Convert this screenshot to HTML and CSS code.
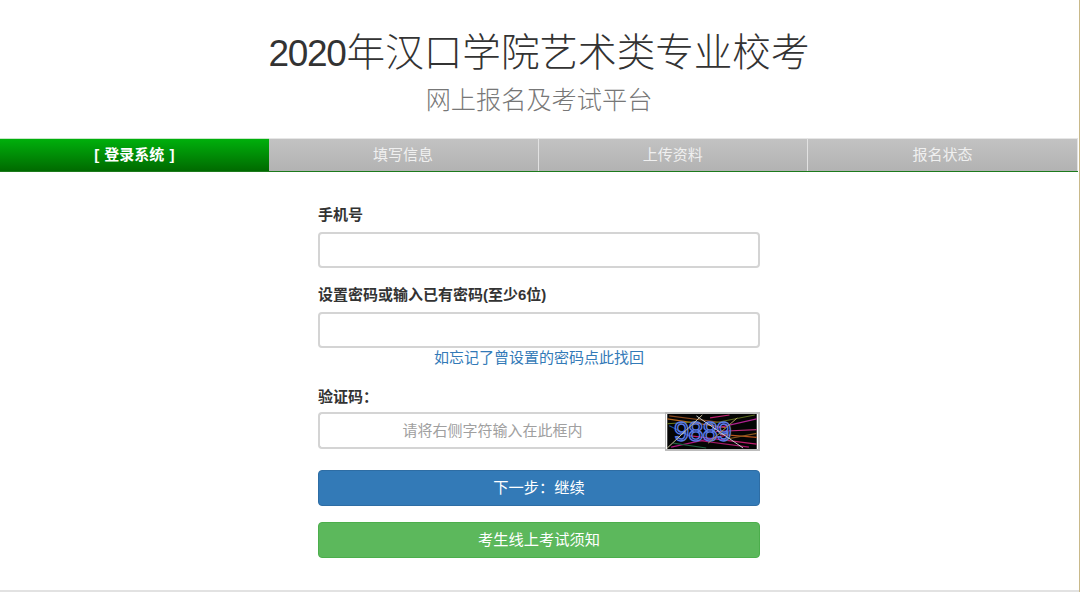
FILE: index.html
```html
<!DOCTYPE html>
<html lang="zh">
<head>
<meta charset="utf-8">
<title>2020年汉口学院艺术类专业校考</title>
<link rel="stylesheet" href="styles.css">
</head>
<body>
<div class="page">
  <header class="head">
    <h1><span class="num">2020</span>年汉口学院艺术类专业校考</h1>
    <h2>网上报名及考试平台</h2>
  </header>
  <nav class="steps">
    <div class="step active">[ 登录系统 ]</div>
    <div class="step">填写信息</div>
    <div class="step">上传资料</div>
    <div class="step">报名状态</div>
  </nav>
  <form class="form">
    <label class="lbl">手机号</label>
    <input class="field" type="text">
    <label class="lbl second">设置密码或输入已有密码(至少6位)</label>
    <input class="field" type="password">
    <a class="forgot" href="#">如忘记了曾设置的密码点此找回</a>
    <label class="lbl third">验证码：</label>
    <div class="captcha">
      <input class="field code" type="text" placeholder="请将右侧字符输入在此框内">
      <svg class="cap-img" viewBox="0 0 92 36" width="95" height="39" aria-label="验证码图片">
        <rect width="92" height="36" fill="#050505"/>
        <g stroke-width="1.2" fill="none">
          <path d="M0 5 L60 14" stroke="#b5651d"/>
          <path d="M2 2 L58 9" stroke="#8a4a20"/>
          <path d="M0 10 L30 8" stroke="#6a7a20"/>
          <path d="M20 22 L92 31" stroke="#c02070"/>
          <path d="M4 34 L60 22" stroke="#b01880"/>
          <path d="M30 27 L84 34" stroke="#a81868"/>
          <path d="M48 15 L92 5" stroke="#b02090"/>
          <path d="M44 10 L90 1" stroke="#5a6a20"/>
          <path d="M50 18 L92 16" stroke="#b82a78"/>
          <path d="M54 21 L92 24" stroke="#b8541c"/>
          <path d="M60 26 L92 20" stroke="#8a5a20"/>
          <path d="M2 12 L26 24" stroke="#2050a0"/>
          <path d="M6 30 L40 35" stroke="#206040"/>
          <path d="M44 4 L64 1" stroke="#c02070"/>
        </g>
        <text class="cap-digits" x="7" y="28">9889</text>
        <g stroke-width="1" fill="none">
          <path d="M0 35 L36 1" stroke="#cfc8a0"/>
          <path d="M30 2 L78 35" stroke="#cfcfcf"/>
          <path d="M42 30 L72 4" stroke="#b09a60"/>
        </g>
      </svg>
    </div>
    <button class="btn primary" type="button">下一步：继续</button>
    <button class="btn success" type="button">考生线上考试须知</button>
  </form>
</div>
</body>
</html>
```
FILE: styles.css
```css
* { box-sizing: border-box; }
html, body { margin: 0; padding: 0; height: 100%; background: #fff; overflow: hidden; }
body {
  font-family: "Helvetica Neue", "Liberation Sans", "Noto Sans CJK SC", sans-serif;
  font-size: 15px;
  color: #333;
}
.page {
  height: 592px;
  padding-right: 2px;
  box-shadow: inset -1px 0 0 #c9b98a, inset 0 -2px 0 #e2e2e2;
  display: flex;
  flex-direction: column;
}
.head { height: 138px; padding-top: 30px; text-align: center; }
h1 {
  margin: 0;
  font-size: 38.6px;
  font-weight: 300;
  line-height: 46px;
  color: #333;
}
.num { font-size: 37px; font-weight: 400; letter-spacing: -1.3px; margin-right: 1px; }
h2 {
  margin: 6px 0 0;
  font-size: 25.2px;
  font-weight: 300;
  line-height: 34px;
  color: #777;
}
.steps {
  display: flex;
  height: 34px;
  border-bottom: 1px solid #1c7a1c;
}
.step {
  flex: 1;
  text-align: center;
  line-height: 32px;
  color: #f0f0f0;
  background: linear-gradient(#c2c2c2, #b2b2b2);
  border-top: 1px solid #e6e6e6;
  border-right: 1px solid #e2e2e2;
}
.step.active {
  color: #fff;
  font-weight: 700;
  word-spacing: 1px;
  background: linear-gradient(#00b00c, #006a00);
  border-top-color: #c8e6c8;
  border-right: 0;
}
.form {
  width: 442px;
  margin: 0 auto;
  display: flex;
  flex-direction: column;
  align-items: stretch;
  padding-top: 33px;
}
.lbl {
  font-weight: 700;
  line-height: 20px;
  margin-bottom: 7px;
}
.lbl.second { margin-top: 17px; }
.lbl.third { margin-top: 19px; margin-bottom: 5px; }
.field {
  height: 36px;
  width: 100%;
  padding: 6px 12px;
  font: inherit;
  background: #fff;
  border: 2px solid #d4d4d4;
  border-radius: 4px;
  outline: 0;
}
.forgot {
  color: #337ab7;
  text-decoration: none;
  text-align: center;
  line-height: 20px;
}
.captcha { display: flex; height: 37px; align-items: flex-start; }
.code {
  flex: 1;
  min-width: 0;
  height: 37px;
  text-align: center;
  border-radius: 4px 0 0 4px;
  border-right: 0;
}
.code::placeholder { color: #a0a0a0; opacity: 1; }
.cap-img { flex: none; display: block; border: 2px solid #bdbdbd; border-left-width: 1px; }
.cap-digits {
  font-family: "Liberation Sans", sans-serif;
  font-size: 28px;
  fill: none;
  stroke: #5a7ce8;
  stroke-width: 1.4;
  letter-spacing: -1px;
}
.btn {
  height: 36px;
  font: inherit;
  font-size: 15.25px;
  color: #fff;
  border: 1px solid;
  border-radius: 4px;
  padding: 0 0 5px;
}
.primary { margin-top: 21px; background: #337ab7; border-color: #2e6da4; }
.success { margin-top: 16px; background: #5cb85c; border-color: #4cae4c; }
```
